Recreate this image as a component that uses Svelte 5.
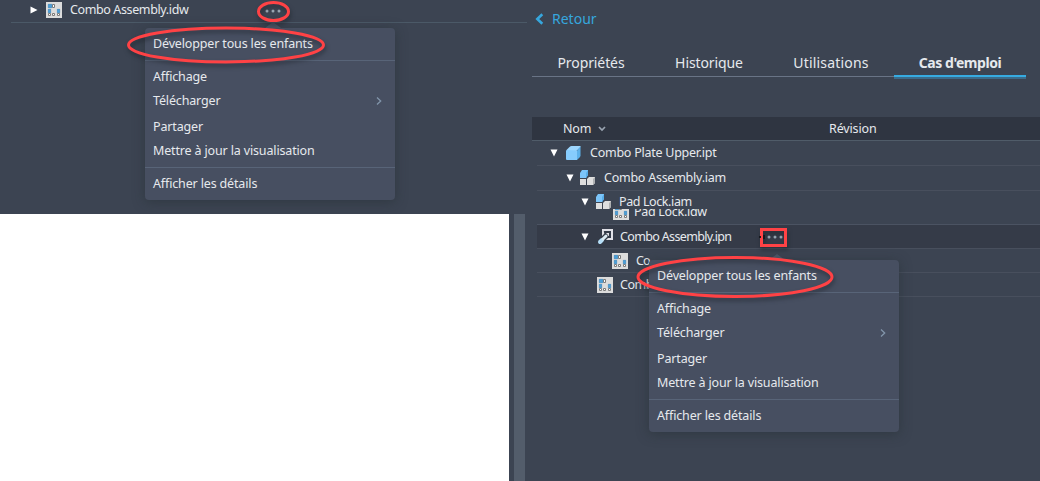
<script>
  const menuGroups = [
    [{ label: 'Développer tous les enfants' }],
    [
      { label: 'Affichage' },
      { label: 'Télécharger', submenu: true },
      { label: 'Partager', gap: true },
      { label: 'Mettre à jour la visualisation' },
    ],
    [{ label: 'Afficher les détails' }],
  ];

  const tabs = [
    { id: 'properties', label: 'Propriétés' },
    { id: 'history', label: 'Historique' },
    { id: 'uses', label: 'Utilisations' },
    { id: 'where-used', label: 'Cas d\'emploi' },
  ];

  let activeTab = $state('where-used');
</script>

{#snippet drawingIcon()}
  <svg class="icon" width="16" height="16" viewBox="0 0 16 16" aria-hidden="true">
    <path fill="#dcdcdc" d="M0 0h16v16H0z" />
    <path fill="#4a9fd8" d="M2 2h4v4H2zM2 7h3v4H2zM11 7h3v4h-3z" />
    <path fill="#fff" stroke="#7a7a7a" d="M6.500 2.500h2v3h-2zM2.500 11.500h2v2h-2zM6.500 11.500h2v2h-2zM11.500 11.500h2v2h-2z" />
    <path fill="none" stroke="#5f93bb" stroke-width=".6" d="M2.300 2.300h3.400v3.400H2.300zM2.300 7.300h2.400v3.400H2.300zM11.300 7.300h2.400v3.400h-2.400z" />
  </svg>
{/snippet}

{#snippet partIcon()}
  <svg class="icon" width="16" height="16" viewBox="0 0 16 16" aria-hidden="true">
    <path fill="#86ccfd" d="M0 6q0-1 1-1h9q1 0 1 1v9H1q-1 0-1-1z" />
    <path fill="#9dd7ff" d="M.5 5l3-3q1-1 2-1h8.500q1 0 .5 1l-3.500 3.500z" />
    <path fill="#5db1ea" d="M11 5.500l3.500-4v9q0 1-1 2L11 15z" />
  </svg>
{/snippet}

{#snippet assemblyIcon()}
  <svg class="icon" width="16" height="16" viewBox="0 0 16 16" aria-hidden="true">
    <path fill="#7cc5fa" d="M0 3l2-3h6v5L6 8H0z" />
    <path fill="#58aee9" d="M6 3l2-3v5L6 8z" />
    <path fill="#dedede" d="M0 9h6v6H0zM7 9l2-2h6v6l-2 2H7z" />
    <path fill="#aeb0b2" d="M13 9l2-2v6l-2 2z" />
  </svg>
{/snippet}

{#snippet presentationIcon()}
  <svg class="icon" width="16" height="16" viewBox="0 0 16 16" aria-hidden="true">
    <path fill="#e0e0e6" d="M5 0h11v11H9L5 7z" />
    <path fill="none" stroke="#343b48" stroke-width="2" d="M8 3h5v5H9z" />
    <path stroke="#343b48" stroke-width="5.500" stroke-linecap="round" d="M4 12l4.500-4.500" />
    <path stroke="#b5def7" stroke-width="4" stroke-linecap="round" d="M3 13l2-2" />
    <path stroke="#dceaf2" stroke-width="3" stroke-linecap="round" d="M6 10l3-3" />
  </svg>
{/snippet}

{#snippet arrow(open)}
  <svg class="arrow" width="8" height="8" viewBox="0 0 8 8" aria-hidden="true">
    <path fill="#fff" d={open ? 'M.5.5h7L4 7.500z' : 'M.5.5l7 3.500-7 3.500z'} />
  </svg>
{/snippet}

{#snippet dots()}
  <svg class="dots" width="16" height="4" viewBox="0 0 16 4" aria-hidden="true">
    <circle cx="2" cy="2" r="1.500" />
    <circle cx="8" cy="2" r="1.500" />
    <circle cx="14" cy="2" r="1.500" />
  </svg>
{/snippet}

{#snippet menu()}
  <div class="menu" role="menu">
    {#each menuGroups as group}
      <div class="group">
        {#each group as item}
          <div class="item" class:gap={item.gap} role="menuitem" tabindex="-1">
            <span>{item.label}</span>
            {#if item.submenu}
              <svg width="6" height="8" viewBox="0 0 6 8" aria-hidden="true">
                <path fill="none" stroke="#8295aa" stroke-width="1.300" d="M1 .5L4.700 4 1 7.500" />
              </svg>
            {/if}
          </div>
        {/each}
      </div>
    {/each}
  </div>
{/snippet}

<div class="page">
  <section class="left">
    <div class="panel">
      <div class="row file">
        {@render arrow(false)}
        {@render drawingIcon()}
        <span class="name">Combo Assembly.idw</span>
        <span class="more">{@render dots()}</span>
      </div>
      <div class="popup left-popup">{@render menu()}</div>
    </div>
    <div class="lower">
      <div class="blank"></div>
      <div class="scrollbar"></div>
    </div>
  </section>

  <section class="right">
    <a class="back" href="#back">
      <svg width="9" height="12" viewBox="0 0 9 12" aria-hidden="true">
        <path fill="none" stroke="#36a7de" stroke-width="2.600" d="M7.300 1.200L2.300 6l5 4.800" />
      </svg>
      Retour
    </a>

    <nav class="tabs">
      {#each tabs as tab}
        <button type="button" class={tab.id} class:active={activeTab === tab.id} onclick={() => (activeTab = tab.id)}>
          {tab.label}
        </button>
      {/each}
    </nav>

    <div class="table-head">
      <span class="col-name">
        Nom
        <svg width="8" height="6" viewBox="0 0 8 6" aria-hidden="true">
          <path fill="none" stroke="#9ba5b2" stroke-width="1.700" d="M1 1l3 3 3-3" />
        </svg>
      </span>
      <span class="col-revision">Révision</span>
    </div>

    <div class="tree">
      <div class="row level-0">
        {@render arrow(true)}
        {@render partIcon()}
        <span class="name">Combo Plate Upper.ipt</span>
      </div>
      <div class="row level-1">
        {@render arrow(true)}
        {@render assemblyIcon()}
        <span class="name">Combo Assembly.iam</span>
      </div>
      <div class="row-pair">
        <div class="row level-2">
          {@render arrow(true)}
          {@render assemblyIcon()}
          <span class="name">Pad Lock.iam</span>
        </div>
        <div class="row clipped">
          {@render drawingIcon()}
          <span class="name">Pad Lock.idw</span>
        </div>
      </div>
      <div class="row level-2 selected">
        {@render arrow(true)}
        {@render presentationIcon()}
        <span class="name">Combo Assembly.ipn</span>
        <span class="more">{@render dots()}</span>
      </div>
      <div class="row level-3">
        {@render drawingIcon()}
        <span class="name">Co</span>
      </div>
      <div class="row level-2b">
        {@render drawingIcon()}
        <span class="name">Comb</span>
      </div>
    </div>
    <div class="popup right-popup">{@render menu()}</div>
  </section>

  <!-- Callouts drawn over both panels -->
  <svg class="marks" width="1040" height="481" viewBox="0 0 1040 481" aria-hidden="true">
    <g fill="none" stroke="#ff4245" stroke-width="3">
      <ellipse cx="273.500" cy="11.500" rx="15" ry="9" />
      <ellipse cx="226" cy="45" rx="97.500" ry="17" />
      <ellipse cx="735" cy="277" rx="97" ry="19.500" />
      <path d="M761.500 229.500h24v16h-24z" />
    </g>
    <path stroke="#16191f" stroke-width="2" d="M759 237h2M764 235v4" />
  </svg>
</div>

<style>
  .page {
    position: relative;
    display: flex;
    width: 1040px;
    height: 481px;
    overflow: hidden;
    background: #3c4452;
    color: #e6e9ed;
    font: 12.5px/24px "Noto Sans", "Open Sans", sans-serif;
    letter-spacing: -0.15px;
    white-space: nowrap;
  }

  svg {
    display: block;
    flex: none;
  }

  .left {
    display: flex;
    flex-direction: column;
    width: 532px;
    flex: none;
  }

  .panel {
    position: relative;
    height: 214px;
  }

  .row {
    display: flex;
    align-items: center;
    box-sizing: border-box;
    border-bottom: 1px solid #484f5d;
  }

  .icon {
    margin: 0 8px;
  }

  .file {
    height: 23px;
    width: 516px;
    margin-left: 11px;
    padding: 0 0 3px 19px;
    border-color: #4b5967;
  }

  .file .name {
    width: 118px;
    letter-spacing: -0.38px;
  }

  .file .more {
    margin-left: 77px;
    padding-top: 2px;
  }

  .dots {
    fill: #9ba9b6;
  }

  .lower {
    display: flex;
    gap: 5px;
    flex: 1;
  }

  .blank {
    width: 509px;
    background: #fff;
  }

  .scrollbar {
    width: 11px;
    background: #535d6b;
  }

  .right {
    position: relative;
    width: 508px;
  }

  .back {
    display: flex;
    align-items: center;
    gap: 8px;
    height: 38px;
    padding-left: 3px;
    color: #36a7de;
    font-size: 14px;
    letter-spacing: 0;
    text-decoration: none;
  }

  .tabs {
    display: flex;
    box-sizing: border-box;
    width: 494px;
    height: 39px;
    border-bottom: 1px solid #697486;
  }

  .tabs button {
    box-sizing: border-box;
    width: 118px;
    height: 38px;
    padding: 13px 0 1px;
    border: 0;
    background: none;
    color: inherit;
    font: 14px/24px "Noto Sans", sans-serif;
    letter-spacing: -0.1px;
  }

  .tabs .uses {
    width: 126px;
    letter-spacing: 0.2px;
  }

  .tabs .where-used {
    width: 132px;
  }

  .tabs .active {
    height: 39px;
    padding: 13px 0 0;
    border-bottom: 2px solid #36abe1;
    box-shadow: 0 2px #3b6b8a;
    font-weight: 700;
    letter-spacing: -0.45px;
  }

  .table-head {
    display: flex;
    align-items: center;
    height: 23px;
    margin-top: 40px;
    padding-left: 31px;
    border-bottom: 1px solid #505c69;
    background: #2f3541;
  }

  .col-name {
    display: flex;
    align-items: center;
    gap: 7px;
    width: 266px;
  }

  .tree {
    margin-left: 5px;
  }

  .level-0,
  .level-1 {
    height: 25px;
  }

  .level-0 {
    padding-left: 13px;
  }

  .level-0 .name {
    letter-spacing: -0.25px;
  }

  .level-1 {
    padding-left: 29px;
  }

  .level-1 .icon {
    margin-left: 6px;
  }

  .level-1 .name {
    letter-spacing: -0.25px;
  }

  .row-pair {
    box-sizing: border-box;
    height: 34px;
    border-bottom: 1px solid #4b5362;
  }

  .level-2 {
    height: 24px;
    padding-left: 44px;
  }

  .level-2 .icon {
    margin-right: 7px;
  }

  .row-pair .row {
    border: 0;
  }

  .row-pair .level-2 {
    height: 18px;
    padding-top: 4px;
    line-height: 18px;
  }

  .row-pair .level-2 .icon {
    margin: 0 7px;
  }

  .row-pair .level-2 .name {
    letter-spacing: -0.4px;
  }

  .clipped {
    height: 11px;
    padding-left: 68px;
    align-items: flex-end;
    line-height: 16px;
    overflow: hidden;
  }

  .clipped .name {
    margin-left: -3px;
    letter-spacing: -0.3px;
  }

  .selected {
    background: #353b48;
  }

  .selected .name {
    width: 112px;
    letter-spacing: -0.65px;
  }

  .selected .more {
    margin-left: 35px;
  }

  .level-3 {
    height: 24px;
    padding-left: 67px;
  }

  .level-3 .name {
    letter-spacing: -0.9px;
  }

  .level-2b {
    height: 24px;
    padding-left: 52px;
  }

  .level-2b .name {
    margin-left: -1px;
    letter-spacing: -0.5px;
  }

  .popup {
    position: absolute;
  }

  .popup::before {
    content: "";
    position: absolute;
    bottom: 100%;
    left: 120px;
    border: 8px solid transparent;
    border-top: 0;
    border-bottom: 6px solid #4a5464;
  }

  .left-popup {
    top: 28px;
    left: 145px;
  }

  .right-popup {
    top: 260px;
    left: 117px;
  }

  .menu {
    width: 250px;
    border-radius: 4px;
    background: #474f61;
    box-shadow: 0 2px 12px rgba(35, 45, 50, 0.5);
  }

  .group {
    padding: 4px 8px;
  }

  .group + .group {
    border-top: 1px solid #586478;
  }

  .item {
    display: flex;
    align-items: center;
    justify-content: space-between;
    height: 24px;
    padding-right: 5px;
  }

  .item.gap {
    margin-top: 2px;
  }

  .marks {
    position: absolute;
    inset: 0;
    filter: drop-shadow(1px 3px 2px rgba(20, 25, 32, 0.5));
    pointer-events: none;
  }
</style>
